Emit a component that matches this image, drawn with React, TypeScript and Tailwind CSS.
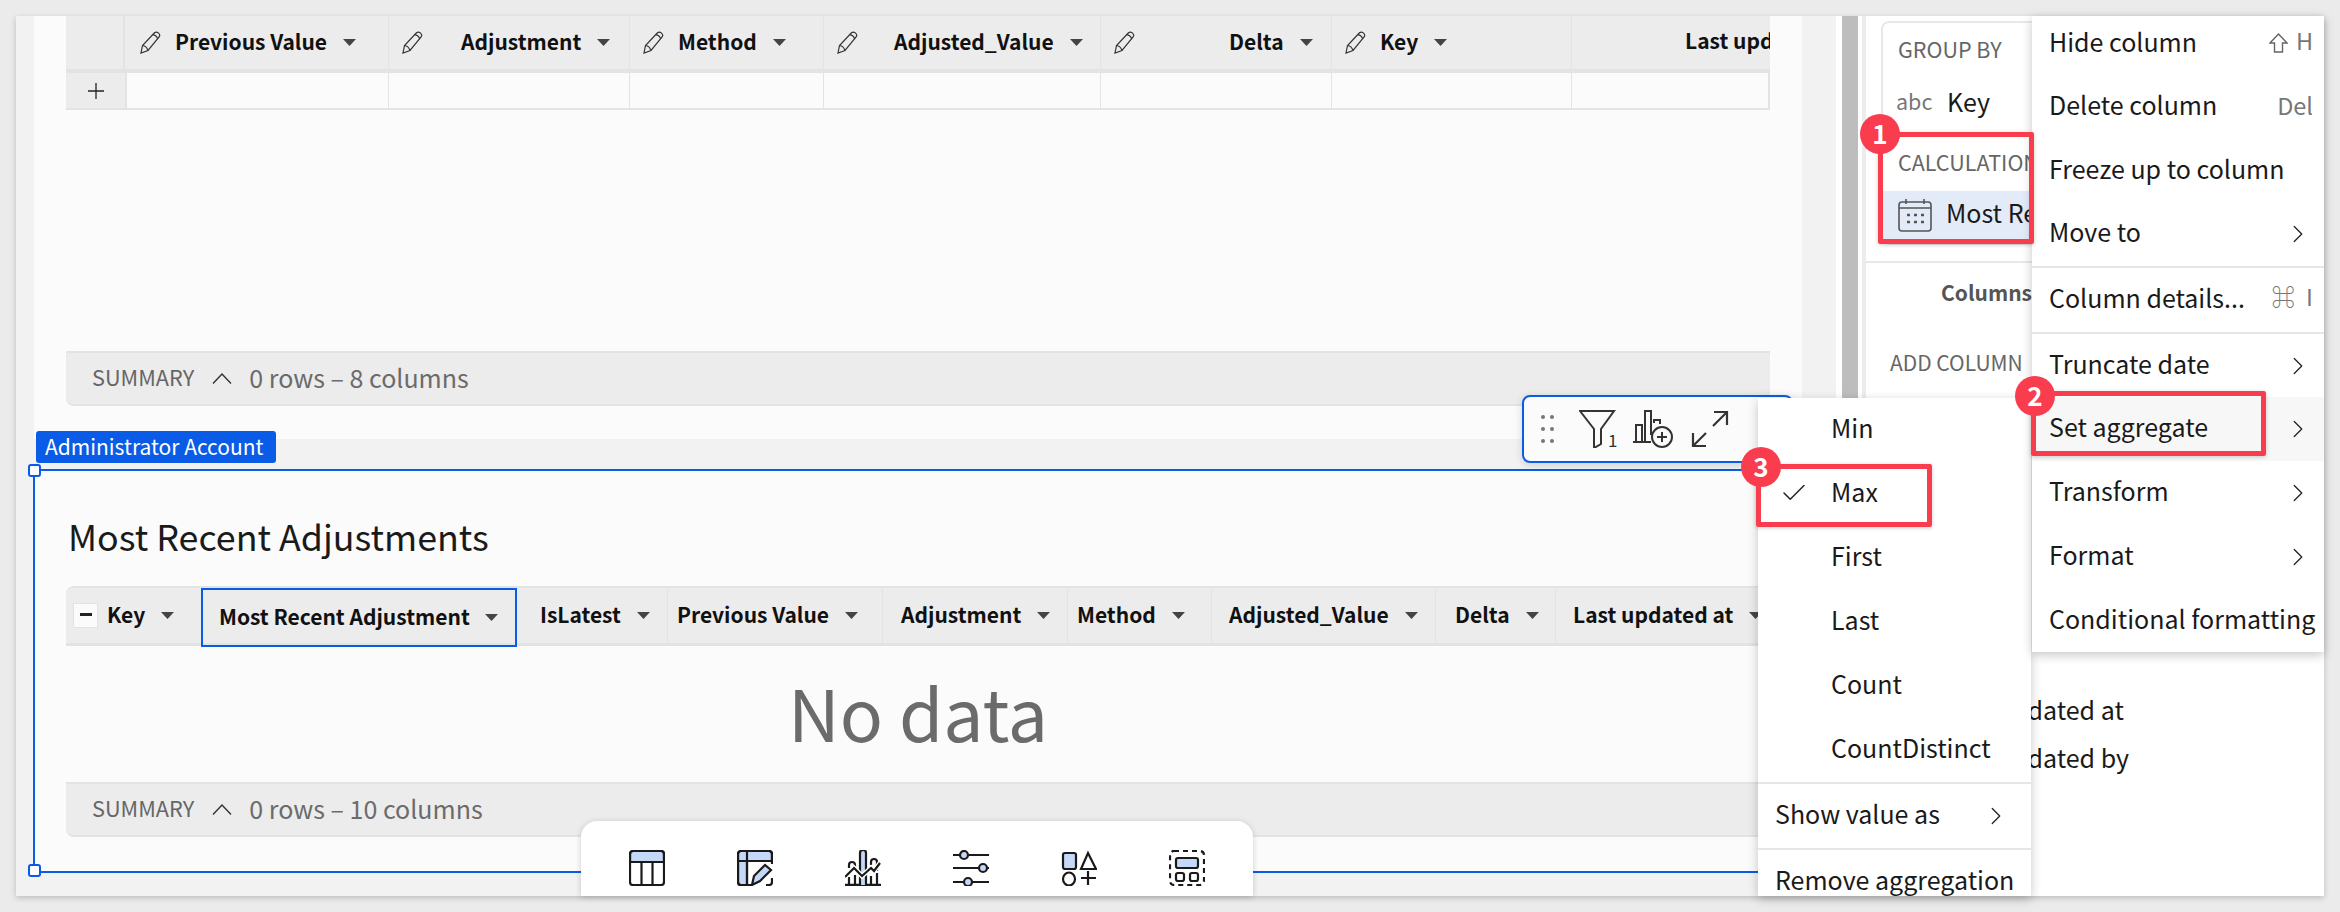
import { Check, ChevronRight } from "lucide-react";

const Caret = () => (
  <svg width="13" height="7" viewBox="0 0 13 7" className="shrink-0">
    <path d="M0 0h13L6.5 7z" fill="#444" />
  </svg>
);

const Pencil = () => (
  <svg width="22" height="23" viewBox="0 0 22 23" fill="none" stroke="#333" strokeWidth="1.2" className="shrink-0">
    <path d="M1 22l1.5-7.5L14.5 1.8c1-.9 2.6-.9 3.8.1 1.3 1.1 1.7 2.7 1 3.8L8 19.5z" />
    <path d="M2.5 14.5c2 .2 4.5 2 5.5 5M12.8 3.6c2 .3 4.2 2 5 4.4" />
  </svg>
);

const editableCols = [
  { name: "Previous Value", cell: "w-[262px]", gap: "ml-[13px]" },
  { name: "Adjustment", cell: "w-[241px]", gap: "ml-[37px]" },
  { name: "Method", cell: "w-[194px]", gap: "ml-[13px]" },
  { name: "Adjusted_Value", cell: "w-[277px]", gap: "ml-[35px]" },
  { name: "Delta", cell: "w-[231px]", gap: "ml-[93px]" },
  { name: "Key", cell: "w-[240px]", gap: "ml-[13px]" },
];

const resultCols = [
  { name: "IsLatest", cell: "w-[151px] pl-[23px]" },
  { name: "Previous Value", cell: "w-[215px] pl-[9px]" },
  { name: "Adjustment", cell: "w-[185px] pl-[18px]" },
  { name: "Method", cell: "w-[144px] pl-[9px]" },
  { name: "Adjusted_Value", cell: "w-[224px] pl-[17px]" },
  { name: "Delta", cell: "w-[120px] pl-[19px]" },
  { name: "Last updated at", cell: "w-[214px] pl-[17px]" },
];

const SummaryBar = ({ text, className }: { text: string; className: string }) => (
  <div className={`flex items-center h-[55px] border-t-2 border-b-2 border-[#e3e3e3] bg-[#ececec] rounded-bl-lg pl-[26px] text-[#6b6b6b] ${className}`}>
    <span className="text-[21.7px] leading-[30px] text-[#666] -translate-y-[2px]">SUMMARY</span>
    <svg width="20" height="11" viewBox="0 0 20 11" fill="none" stroke="#333" strokeWidth="1.4" className="ml-[18px]">
      <path d="M1 10.5L10 1l9 9.500" />
    </svg>
    <span className="ml-[17px] text-[25px] leading-[30px] -translate-y-[2px]">{text}</span>
  </div>
);

const InputTable = () => (
  <div className="w-[1704px] overflow-hidden">
    <div className="flex h-[53px] bg-[#ececec] border-b-0">
      <div className="w-[59px] border-r-2 border-[#e3e3e3] mr-[2px]" />
      {editableCols.map((col) => (
        <div key={col.name} className={`${col.cell} flex items-center border-r border-[#e3e3e3] text-[21px] font-semibold text-[#111]`}>
          <span className="ml-[13px] shrink-0 first:ml-[13px]">
            <Pencil />
          </span>
          <span className={`${col.gap} leading-[28px] -translate-y-[2px]`}>{col.name}</span>
          <span className="ml-[16px]">
            <Caret />
          </span>
        </div>
      ))}
      <div className="flex-1 flex items-center pl-[113px] text-[21px] font-semibold text-[#111] whitespace-nowrap overflow-hidden">
        <span className="-translate-y-[2px]">Last updated at</span>
      </div>
    </div>
    <div className="flex h-[41px] border-t-4 border-b-2 border-[#e3e3e3] border-r-2">
      <div className="w-[59px] bg-[#ececec] flex items-center justify-center text-[#222]">
        <svg width="16" height="16" viewBox="0 0 16 16" stroke="#222" strokeWidth="1.3">
          <path d="M8 0v16M0 8h16" />
        </svg>
      </div>
      <div className="w-[2px] bg-[#e3e3e3]" />
      {editableCols.map((col) => (
        <div key={col.name} className={`${col.cell} border-r border-[#e3e3e3]`} />
      ))}
    </div>
  </div>
);

const ResultTable = () => (
  <div className="w-[1704px] rounded-tl-lg border-t-2 border-[#e3e3e3] overflow-hidden">
    <div className="flex h-[58px] bg-[#ececec] border-b-[3px] border-[#e3e3e3]">
      <div className="w-[135px] flex items-center pl-[7px]">
        <div className="w-[25px] h-[25px] bg-[#fbfbfb] border border-[#e3e3e3] flex items-center justify-center">
          <div className="w-[12px] h-[2.5px] bg-[#222] -translate-y-[1px]" />
        </div>
        <span className="ml-[9px] text-[21px] font-semibold text-[#111] leading-[28px] -translate-y-[2px]">Key</span>
        <span className="ml-[16px]">
          <Caret />
        </span>
      </div>
      <div className="w-[316px] h-[59px] flex items-center pl-[16px] border-2 border-[#0a5ce6] text-[21px] font-semibold text-[#111]">
        <span className="leading-[28px] -translate-y-[2px]">Most Recent Adjustment</span>
        <span className="ml-[15px]">
          <Caret />
        </span>
      </div>
      {resultCols.map((col) => (
        <div key={col.name} className={`${col.cell} flex items-center border-r border-[#e3e3e3] text-[21px] font-semibold text-[#111] whitespace-nowrap`}>
          <span className="leading-[28px] -translate-y-[2px]">{col.name}</span>
          <span className="ml-[16px]">
            <Caret />
          </span>
        </div>
      ))}
    </div>
    <div className="h-[136px] flex items-center justify-center text-[71.5px] leading-[100px] text-[#6b6b6b] pb-[6px]">No data</div>
  </div>
);

const BarPlusIcon = () => (
  <svg width="40" height="40" viewBox="0 0 40 40" fill="none" stroke="#333" strokeWidth="2">
    <path d="M0 33h18M3 33V16h6v17M12 33V2h6v24M21 14v-3h6v4" />
    <circle cx="29" cy="28" r="10" />
    <path d="M29 23v10M24 28h10" />
  </svg>
);

const FloatingToolbar = () => (
  <div className="absolute left-[1522px] top-[395px] w-[271px] h-[68px] bg-[#fbfbfb] border-2 border-[#0a5ce6] rounded-[8px] shadow-[0_2px_8px_rgba(0,0,0,0.15)] flex items-center z-10">
    <div className="grid grid-cols-2 gap-x-[5px] gap-y-[8px] ml-[17px]">
      {[0, 1, 2, 3, 4, 5].map((i) => (
        <span key={i} className="w-[4px] h-[4px] rounded-full bg-[#777]" />
      ))}
    </div>
    <div className="ml-[25px] relative w-[38px] h-[38px]">
      <svg width="38" height="38" viewBox="0 0 38 38" fill="none" stroke="#333" strokeWidth="2">
        <path d="M1 1h34L22 19v15l-7 4V19z" />
      </svg>
      <span className="absolute left-[29px] top-[20px] text-[17px] leading-[20px] text-[#333]">1</span>
    </div>
    <div className="ml-[16px]">
      <BarPlusIcon />
    </div>
    <svg width="38" height="38" viewBox="0 0 38 38" fill="none" stroke="#333" strokeWidth="2.2" className="ml-[18px]">
      <path d="M22 16L36 2M23 2h13v13M15 23L2 36M2 23v13h13" />
    </svg>
  </div>
);

const tray = "#c5d8f7";
const ink = "#1a1a1a";

const BottomToolbar = () => (
  <div className="absolute left-[581px] top-[821px] w-[672px] h-[75px] bg-white rounded-t-[16px] shadow-[0_1px_6px_rgba(0,0,0,0.18)] flex items-start pt-[29px] pl-[48px] gap-[72px] z-10">
    <svg width="36" height="36" viewBox="0 0 36 36" fill="none" stroke={ink} strokeWidth="2.2">
      <path d="M1 12V4a3 3 0 0 1 3-3h28a3 3 0 0 1 3 3v8z" fill={tray} />
      <rect x="1" y="1" width="34" height="34" rx="3" />
      <path d="M12.500 12v23M23.500 12v23" />
    </svg>
    <svg width="36" height="36" viewBox="0 0 36 36" fill="none" stroke={ink} strokeWidth="2.2">
      <path d="M1 4a3 3 0 0 1 3-3h28a3 3 0 0 1 3 3v7H10v24H4a3 3 0 0 1-3-3z" fill={tray} />
      <path d="M14 35H4a3 3 0 0 1-3-3V4a3 3 0 0 1 3-3h28a3 3 0 0 1 3 3v10M10 1v34M1 11h34M35 28v4a3 3 0 0 1-3 3h-3" />
      <path d="M15 35l2-9 11-11 6 5-11 11z" fill={tray} />
    </svg>
    <svg width="36" height="36" viewBox="0 0 36 36" fill="none" stroke={ink} strokeWidth="2.2">
      <path d="M0 35h36" strokeWidth="2.600" />
      <path d="M15 35V3a3 3 0 0 1 6 0v32" fill={tray} />
      <path d="M4 18v-3a3 3 0 0 1 6 0v4M4 27v8M10 25v10M26 15v-3a3 3 0 0 1 6 0v9M26 26v9M32 23v12" />
      <path d="M0 27l9-9 8 8 9-8 3 3 6-8" stroke="#fff" strokeWidth="5" />
      <path d="M0 27l9-9 8 8 9-8 3 3 6-8" />
    </svg>
    <svg width="36" height="36" viewBox="0 0 36 36" fill="none" stroke={ink} strokeWidth="2.2">
      <path d="M0 5h7M16 5h20M0 18h26M34 18h2M0 32h10M19 32h17" />
      <circle cx="11" cy="5" r="4" fill={tray} />
      <circle cx="30" cy="18" r="4" fill={tray} />
      <circle cx="15" cy="32" r="4" fill={tray} />
    </svg>
    <svg width="36" height="36" viewBox="0 0 36 36" fill="none" stroke={ink} strokeWidth="2.2">
      <rect x="2" y="3" width="13" height="16" rx="2" fill={tray} />
      <path d="M27 3l8 16H20z" />
      <ellipse cx="8" cy="29" rx="6" ry="6.500" />
      <path d="M27 21v14M20 28h15" />
    </svg>
    <svg width="36" height="36" viewBox="0 0 36 36" fill="none" stroke={ink} strokeWidth="2.2">
      <rect x="1" y="1" width="34" height="34" rx="4" strokeDasharray="5 4" />
      <rect x="7" y="8" width="22" height="10" rx="2" fill={tray} />
      <rect x="7" y="23" width="8" height="8" rx="2" />
      <rect x="21" y="23" width="8" height="8" rx="2" />
    </svg>
  </div>
);

const MenuRow = ({ label, h, hint, arrow, active }: { label: string; h: string; hint?: React.ReactNode; arrow?: boolean; active?: boolean }) => (
  <div className={`${h} flex items-center pl-[17px] pr-[11px] whitespace-nowrap ${active ? "bg-[#f7f7f7]" : ""}`}>
    <span className="leading-[32px] -translate-y-[3px]">{label}</span>
    {hint && <span className="ml-auto -translate-y-[3px]">{hint}</span>}
    {arrow && <ChevronRight size={30} strokeWidth={1} className="ml-auto text-[#222]" />}
  </div>
);

const ColumnMenu = () => (
  <div className="absolute left-[2032px] top-[16px] w-[292px] h-[636px] bg-white shadow-[0_3px_10px_rgba(0,0,0,0.22)] overflow-hidden z-20 text-[25px] text-[#1a1a1a]">
    <div className="-mt-[4px]">
      <MenuRow label="Hide column" h="h-[63.5px]" hint={<span className="flex items-center"><svg width="19" height="20" viewBox="0 0 19 20" fill="none" stroke="#666" strokeWidth="1.4" className="translate-y-[2px]"><path d="M9.500 1L18 10h-4.500v9h-8v-9H1z" /></svg><span className="ml-[8px] text-[#777] text-[23.5px]">H</span></span>} />
      <MenuRow label="Delete column" h="h-[63.5px]" hint={<span className="text-[#777] text-[23.5px]">Del</span>} />
      <MenuRow label="Freeze up to column" h="h-[63.5px]" />
      <MenuRow label="Move to" h="h-[63.5px]" arrow />
    </div>
    <div className="h-[2px] bg-[#e6e6e6]" />
    <MenuRow label="Column details..." h="h-[64px]" hint={<span className="flex items-center text-[#777] text-[23.5px]">⌘<span className="ml-[11px]">I</span></span>} />
    <div className="h-[2px] bg-[#e6e6e6]" />
    <MenuRow label="Truncate date" h="h-[63px]" arrow />
    <MenuRow label="Set aggregate" h="h-[64px]" arrow active />
    <MenuRow label="Transform" h="h-[64px]" arrow />
    <MenuRow label="Format" h="h-[64px]" arrow />
    <MenuRow label="Conditional formatting" h="h-[63px]" />
  </div>
);

const AggregateMenu = () => (
  <div className="absolute left-[1758px] top-[398px] w-[273px] h-[498px] bg-white shadow-[0_3px_10px_rgba(0,0,0,0.22)] overflow-hidden z-20 text-[25px] text-[#1a1a1a]">
    {["Min", "Max", "First", "Last", "Count", "CountDistinct"].map((item) => (
      <div key={item} className="h-[64px] flex items-center pl-[73px] relative">
        {item === "Max" && <Check size={30} strokeWidth={1.2} className="absolute left-[21px] -translate-y-[1px] text-[#222]" />}
        <span className="leading-[32px] -translate-y-[3px]">{item}</span>
      </div>
    ))}
    <div className="h-[2px] bg-[#e6e6e6]" />
    <div className="h-[64px] flex items-center pl-[17px] pr-[20px]">
      <span className="leading-[32px] -translate-y-[3px]">Show value as</span>
      <ChevronRight size={30} strokeWidth={1} className="ml-auto text-[#222]" />
    </div>
    <div className="h-[2px] bg-[#e6e6e6]" />
    <div className="h-[64px] flex items-center pl-[17px]">
      <span className="leading-[32px] -translate-y-[3px]">Remove aggregation</span>
    </div>
  </div>
);

const Callout = ({ box, badge, n }: { box: string; badge: string; n: number }) => (
  <>
    <div className={`absolute ${box} border-[5px] border-[#f93d4e] rounded-[2px] z-30 shadow-[0_1px_4px_rgba(0,0,0,0.2)]`} />
    <div className={`absolute ${badge} w-[40px] h-[40px] rounded-full bg-[#f93d4e] text-white text-[26px] font-bold leading-[38px] text-center z-30`}>{n}</div>
  </>
);

const Sidebar = () => (
  <div className="flex-1 bg-white text-[#1a1a1a] overflow-hidden">
    <div className="h-[247px] pt-[5px] pl-[15px] border-b-2 border-[#e8e8e8]">
      <div className="w-[500px] h-[224px] border-2 border-[#e8e8e8] rounded-lg pt-[12px]">
        <div className="pl-[15px] text-[21.5px] leading-[28px] text-[#666]">GROUP BY</div>
        <div className="flex items-center h-[40px] mt-[18px] pl-[13px]">
          <span className="w-[38px] text-[21.5px] text-[#777] leading-[28px]">abc</span>
          <span className="ml-[13px] text-[25px] leading-[32px]">Key</span>
        </div>
        <div className="pl-[15px] mt-[27px] text-[21.5px] leading-[28px] text-[#666]">CALCULATIONS</div>
        <div className="flex items-center h-[48px] mt-[15px] bg-[#e3eaf8] pl-[15px]">
          <svg width="34" height="33" viewBox="0 0 34 33" fill="none" stroke="#555" strokeWidth="1.6">
            <rect x="1" y="3" width="32" height="29" rx="3" />
            <path d="M1 9h32M8 0v5M26 0v5" />
            <path d="M9 16h3M16 16h3M23 16h3M9 23h3M16 23h3M23 23h3" strokeWidth="2.600" />
          </svg>
          <span className="ml-[14px] text-[25px] leading-[32px] -translate-y-[3px]">Most Recent Adjustment</span>
        </div>
      </div>
    </div>
    <div className="h-[64px] flex items-center pl-[75px] font-semibold text-[21px] text-[#555]">
      <span className="-translate-y-[2px]">Columns</span>
    </div>
    <div className="h-[38px] mt-[20px] flex items-center pl-[24px] text-[21px] text-[#666] whitespace-nowrap">
      <span className="-translate-y-[3px]">ADD COLUMN</span>
    </div>
    <div className="h-[48px] mt-[301px] pl-[77px] flex items-center text-[25px] whitespace-nowrap">Last updated at</div>
    <div className="h-[48px] pl-[77px] flex items-center text-[25px] whitespace-nowrap">Last updated by</div>
  </div>
);

export default function App() {
  return (
    <div className="relative w-[2340px] h-[912px] bg-[#ebebeb] py-4 pl-4 pr-4 overflow-hidden font-['Noto_Sans_CJK_SC','Liberation_Sans',sans-serif]">
      <div className="relative flex h-[880px] w-[2308px] shadow-[0_2px_6px_rgba(0,0,0,0.2)]">
        <div className="w-[1820px] bg-[#f2f2f2] pl-[18px] pr-[34px]">
          <div className="h-[423px] bg-[#fbfbfb] pl-[32px] flex flex-col">
            <InputTable />
            <div className="h-[241px]" />
            <SummaryBar text="0 rows – 8 columns" className="w-[1704px]" />
          </div>
          <div className="relative mt-[30px] h-[404px] border-y-2 border-l-2 border-[#0a5ce6] -ml-px bg-[#fbfbfb] pl-[31px] pt-[115px]">
            <div className="absolute left-[33px] top-[41px] text-[35.8px] leading-[46px] text-[#1a1a1a]">Most Recent Adjustments</div>
            <ResultTable />
            <SummaryBar text="0 rows – 10 columns" className="w-[1704px]" />
          </div>
        </div>
        <div className="w-[6px] bg-white" />
        <div className="w-[16px] bg-[#bdbdbd]" />
        <div className="w-[4px] bg-white" />
        <div className="w-[4px] bg-[#ececec]" />
        <Sidebar />
      </div>

      <div className="absolute left-[36px] top-[431px] h-[32px] w-[240px] rounded-[3px] bg-[#0a5ce6] text-white text-[21px] leading-[30px] pl-[9px] z-10">Administrator Account</div>
      <div className="absolute left-[28px] top-[464px] w-[13px] h-[13px] rounded-[3px] bg-white border-2 border-[#0a5ce6] z-10" />
      <div className="absolute left-[28px] top-[864px] w-[13px] h-[13px] rounded-[3px] bg-white border-2 border-[#0a5ce6] z-10" />

      <FloatingToolbar />
      <BottomToolbar />
      <AggregateMenu />
      <ColumnMenu />

      <Callout box="left-[1878px] top-[132px] w-[156px] h-[112px]" badge="left-[1860px] top-[114px]" n={1} />
      <Callout box="left-[2031px] top-[391px] w-[235px] h-[65px]" badge="left-[2015px] top-[376px]" n={2} />
      <Callout box="left-[1756px] top-[464px] w-[176px] h-[63px]" badge="left-[1741px] top-[447px]" n={3} />
    </div>
  );
}
